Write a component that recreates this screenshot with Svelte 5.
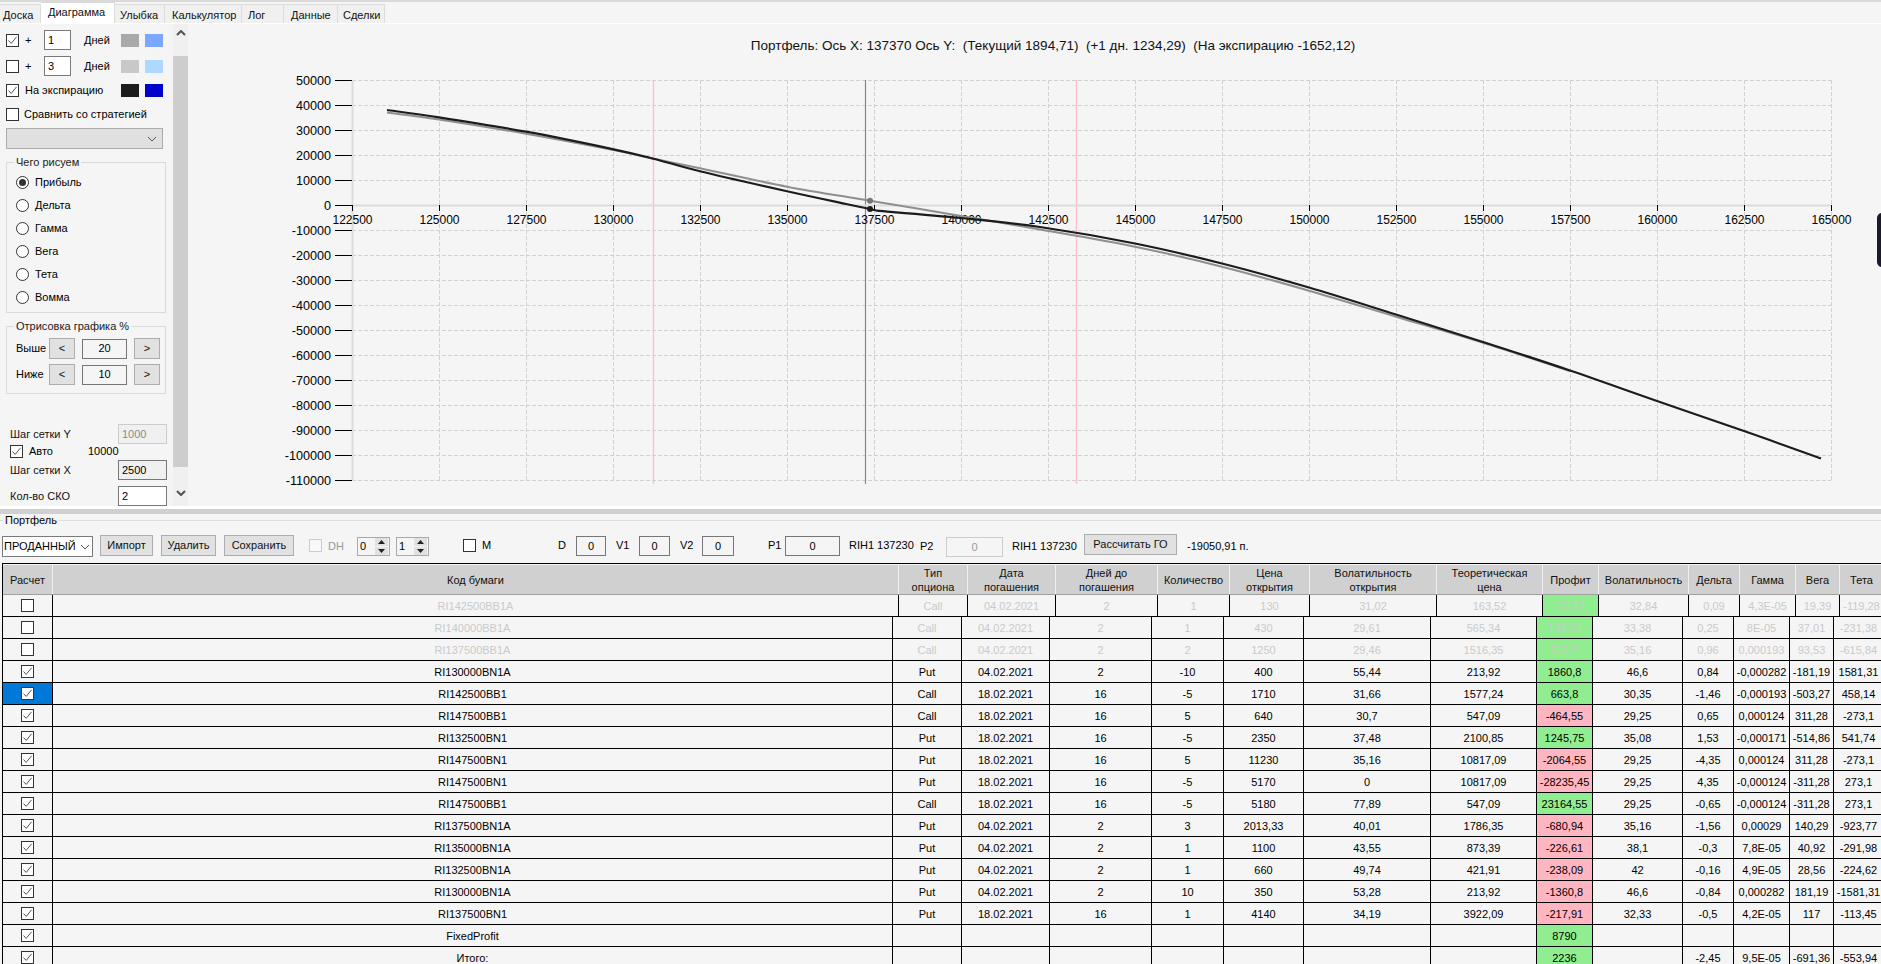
<script>
  const tabs = [
    { t: 'Доска', w: 41, px: 3 },
    { t: 'Диаграмма', w: 74, px: 7, active: true },
    { t: 'Улыбка', w: 50, px: 5 },
    { t: 'Калькулятор', w: 77, px: 7 },
    { t: 'Лог', w: 42, px: 6 },
    { t: 'Данные', w: 54, px: 7 },
    { t: 'Сделки', w: 47, px: 5 }
  ];
  const radios = ['Прибыль', 'Дельта', 'Гамма', 'Вега', 'Тета', 'Вомма'];
  const heads = [
    ['Код бумаги'], ['Тип', 'опциона'], ['Дата', 'погашения'], ['Дней до', 'погашения'], ['Количество'],
    ['Цена', 'открытия'], ['Волатильность', 'открытия'], ['Теоретическая', 'цена'], ['Профит'],
    ['Волатильность'], ['Дельта'], ['Гамма'], ['Вега'], ['Тета']
  ];
  const raw = [
    'RI142500BB1A|Call|04.02.2021|2|1|130|31,02|163,52|33,52|32,84|0,09|4,3E-05|19,39|-119,28',
    'RI140000BB1A|Call|04.02.2021|2|1|430|29,61|565,34|135,34|33,38|0,25|8E-05|37,01|-231,38',
    'RI137500BB1A|Call|04.02.2021|2|2|1250|29,46|1516,35|532,7|35,16|0,96|0,000193|93,53|-615,84',
    'RI130000BN1A|Put|04.02.2021|2|-10|400|55,44|213,92|1860,8|46,6|0,84|-0,000282|-181,19|1581,31',
    'RI142500BB1|Call|18.02.2021|16|-5|1710|31,66|1577,24|663,8|30,35|-1,46|-0,000193|-503,27|458,14',
    'RI147500BB1|Call|18.02.2021|16|5|640|30,7|547,09|-464,55|29,25|0,65|0,000124|311,28|-273,1',
    'RI132500BN1|Put|18.02.2021|16|-5|2350|37,48|2100,85|1245,75|35,08|1,53|-0,000171|-514,86|541,74',
    'RI147500BN1|Put|18.02.2021|16|5|11230|35,16|10817,09|-2064,55|29,25|-4,35|0,000124|311,28|-273,1',
    'RI147500BN1|Put|18.02.2021|16|-5|5170|0|10817,09|-28235,45|29,25|4,35|-0,000124|-311,28|273,1',
    'RI147500BB1|Call|18.02.2021|16|-5|5180|77,89|547,09|23164,55|29,25|-0,65|-0,000124|-311,28|273,1',
    'RI137500BN1A|Put|04.02.2021|2|3|2013,33|40,01|1786,35|-680,94|35,16|-1,56|0,00029|140,29|-923,77',
    'RI135000BN1A|Put|04.02.2021|2|1|1100|43,55|873,39|-226,61|38,1|-0,3|7,8E-05|40,92|-291,98',
    'RI132500BN1A|Put|04.02.2021|2|1|660|49,74|421,91|-238,09|42|-0,16|4,9E-05|28,56|-224,62',
    'RI130000BN1A|Put|04.02.2021|2|10|350|53,28|213,92|-1360,8|46,6|-0,84|0,000282|181,19|-1581,31',
    'RI137500BN1|Put|18.02.2021|16|1|4140|34,19|3922,09|-217,91|32,33|-0,5|4,2E-05|117|-113,45',
    'FixedProfit||||||||8790|||||',
    'Итого:||||||||2236||-2,45|9,5E-05|-691,36|-553,94'
  ];
  const rows = raw.map((s, i) => ({ cells: s.split('|'), off: i < 3, sel: i === 4 }));

  const gridX = Array.from({ length: 18 }, (_, i) => 352.5 + i * 87);
  const xLabels = gridX.map((x, i) => ({ x, t: String(122500 + i * 2500) }));
  const gridY = Array.from({ length: 17 }, (_, i) => 80.5 + i * 25);
  const yLabels = gridY.map((y, i) => ({ y, t: String(50000 - i * 10000) }));

  // Catmull-Rom through the points, so the curve has no kinks between samples
  function smooth(p) {
    let d = `M${p[0][0]} ${p[0][1]}`;
    for (let i = 0; i < p.length - 1; i++) {
      const a = p[i - 1] || p[i], b = p[i], c = p[i + 1], e = p[i + 2] || c;
      const c1 = [b[0] + (c[0] - a[0]) / 6, b[1] + (c[1] - a[1]) / 6];
      const c2 = [c[0] - (e[0] - b[0]) / 6, c[1] - (e[1] - b[1]) / 6];
      d += ` C${c1[0]} ${c1[1]} ${c2[0]} ${c2[1]} ${c[0]} ${c[1]}`;
    }
    return d;
  }
  const black = smooth([[387, 110], [439, 117.3], [526, 131.7], [613.6, 149.3], [653.6, 158.7], [700, 171.3], [787, 191.3], [846, 204], [870, 209]])
    + ' L877 210.7 ' + smooth([[877, 210.7], [961, 218], [1040, 227], [1135, 243.5], [1222, 263.5], [1309, 287.5], [1396, 314.5], [1483, 342], [1570, 370.5], [1657, 401], [1744, 431], [1821, 458.5]]).replace(/^M\S+ \S+ /, '');
  const grey = smooth([[387, 112.5], [439, 119.5], [526, 133.7], [613.6, 150], [653.6, 158.7], [700, 168.3], [787, 186.7], [870, 200.7], [961, 216], [1040, 229.5], [1135, 246.7], [1222, 266.7], [1309, 290.7], [1396, 316.7], [1483, 342.8], [1570, 371]]);
</script>

{#snippet cb(on)}
  <span class="cb">
    {#if on}
      <svg width="11" height="11" viewBox="0 0 11 11"><path d="M1.5 5.5 L4.2 8.4 L9.6 1.8" fill="none" stroke="#555" stroke-width="1" /></svg>
    {/if}
  </span>
{/snippet}

{#snippet arrow(up)}
  <svg class="spin-tri" width="7" height="4" viewBox="0 0 7 4"><path d={up ? 'M3.5 0 L7 4 L0 4 Z' : 'M0 0 L7 0 L3.5 4 Z'} fill="#222" /></svg>
{/snippet}

{#snippet spin(v)}
  <span class="spin">
    <span class="spin-v">{v}</span>
    <span class="spin-btns">
      <span class="spin-b">{@render arrow(true)}</span>
      <span class="spin-b">{@render arrow(false)}</span>
    </span>
  </span>
{/snippet}

<div class="app">
  <div class="topbar"></div>
  <div class="tabs">
    {#each tabs as tab}
      <div class="tab" class:active={tab.active} style="width:{tab.w}px;padding-left:{tab.px}px">{tab.t}</div>
    {/each}
  </div>

  <div class="upper">
    <div class="side">
      <div class="row r1">
        {@render cb(true)}<span class="plus">+</span><span class="num">1</span><span class="days">Дней</span>
        <span class="sw a1"></span><span class="sw a2"></span>
      </div>
      <div class="row r2">
        {@render cb(false)}<span class="plus">+</span><span class="num">3</span><span class="days">Дней</span>
        <span class="sw b1"></span><span class="sw b2"></span>
      </div>
      <div class="row r3">
        {@render cb(true)}<span class="exp">На экспирацию</span>
        <span class="sw c1"></span><span class="sw c2"></span>
      </div>
      <div class="row r4">
        {@render cb(false)}<span class="cmp">Сравнить со стратегией</span>
      </div>
      <div class="dis-combo">
        <svg width="10" height="6" viewBox="0 0 10 6"><path d="M1 1 L5 5 L9 1" fill="none" stroke="#555" stroke-width="1" /></svg>
      </div>

      <div class="group g1">
        <div class="legend">Чего рисуем</div>
        <div class="radios">
          {#each radios as r, i}
            <div class="radio-row">
              <span class="rb">{#if i === 0}<span class="dot"></span>{/if}</span>
              <span class="rt">{r}</span>
            </div>
          {/each}
        </div>
      </div>

      <div class="group g2">
        <div class="legend">Отрисовка графика %</div>
        <div class="draw">
          <div class="draw-row"><span class="dl">Выше</span><span class="btn sq">&lt;</span><span class="fld">20</span><span class="btn sq">&gt;</span></div>
          <div class="draw-row"><span class="dl">Ниже</span><span class="btn sq">&lt;</span><span class="fld">10</span><span class="btn sq">&gt;</span></div>
        </div>
      </div>

      <div class="st st-y"><span class="st-l">Шаг сетки Y</span><span class="val dis">1000</span></div>
      <div class="auto">{@render cb(true)}<span class="auto-l">Авто</span><span class="auto-v">10000</span></div>
      <div class="st st-x"><span class="st-l">Шаг сетки X</span><span class="val grey">2500</span></div>
      <div class="st st-s"><span class="st-l">Кол-во СКО</span><span class="val wh">2</span></div>
    </div>

    <div class="sb">
      <div class="sb-end top"><svg width="10" height="6" viewBox="0 0 10 6"><path d="M1 5 L5 1 L9 5" fill="none" stroke="#505050" stroke-width="2" /></svg></div>
      <div class="sb-thumb"></div>
      <div class="sb-end bot"><svg width="10" height="6" viewBox="0 0 10 6"><path d="M1 1 L5 5 L9 1" fill="none" stroke="#505050" stroke-width="2" /></svg></div>
    </div>

    <svg class="chart" viewBox="188 24 1693 482" width="1693" height="482">
      <text x="1053" y="50" text-anchor="middle" class="title" xml:space="preserve">Портфель: Ось X: 137370 Ось Y:  (Текущий 1894,71)  (+1 дн. 1234,29)  (На экспирацию -1652,12)</text>
      {#each gridY as y, i}
        {#if i !== 5}<line x1="352" x2="1831" y1={y} y2={y} class="grid" />{/if}
      {/each}
      {#each gridX as x, i}
        {#if i > 0}<line x1={x} x2={x} y1="80" y2="480" class="grid" />{/if}
      {/each}
      <line x1="653.5" x2="653.5" y1="80" y2="484" class="pink" />
      <line x1="1076.5" x2="1076.5" y1="80" y2="484" class="pink" />
      <line x1="865.5" x2="865.5" y1="80" y2="484" class="vline" />
      <line x1="352.5" x2="352.5" y1="80" y2="481" class="axis" />
      <line x1="352" x2="1831" y1="205.5" y2="205.5" class="axis" />
      {#each yLabels as l}
        <line x1="335" x2="352" y1={l.y} y2={l.y} class="tick" />
        <text x="331" y={l.y + 4.5} text-anchor="end" class="lab ylab">{l.t}</text>
      {/each}
      {#each xLabels as l}
        <line x1={l.x} x2={l.x} y1="205" y2="211" class="tick" />
        <text x={l.x} y="223.5" text-anchor="middle" class="lab">{l.t}</text>
      {/each}
      <path d={grey} class="c-grey" />
      <path d={black} class="c-black" />
      <circle cx="870" cy="200.7" r="3" fill="#777" />
      <circle cx="870" cy="209" r="3" fill="#1c1c1c" />
      <rect x="1877" y="213" width="12" height="54" rx="5" fill="#1a1a2a" />
    </svg>
  </div>

  <div class="split"></div>

  <div class="pf-head"><div class="pf-legend">Портфель</div></div>

  <div class="toolbar">
    <span class="combo"><span class="combo-t">ПРОДАННЫЙ</span><svg width="10" height="6" viewBox="0 0 10 6"><path d="M1 1 L5 5 L9 1" fill="none" stroke="#555" stroke-width="1" /></svg></span>
    <span class="btn t-imp">Импорт</span>
    <span class="btn t-del">Удалить</span>
    <span class="btn t-sav">Сохранить</span>
    <span class="t-dh"><span class="cb light"></span></span><span class="t-dhl">DH</span>
    <span class="t-s1">{@render spin('0')}</span>
    <span class="t-s2">{@render spin('1')}</span>
    <span class="t-m">{@render cb(false)}</span><span class="t-ml">M</span>
    <span class="t-d">D</span><span class="box t-db">0</span>
    <span class="t-v1">V1</span><span class="box t-v1b">0</span>
    <span class="t-v2">V2</span><span class="box t-v2b">0</span>
    <span class="t-p1">P1</span><span class="box t-p1b">0</span>
    <span class="t-r1">RIH1 137230</span>
    <span class="t-p2">P2</span><span class="box off t-p2b">0</span>
    <span class="t-r2">RIH1 137230</span>
    <span class="btn t-calc">Рассчитать ГО</span>
    <span class="t-go">-19050,91 п.</span>
  </div>

  <div class="table">
    <div class="hrow cols-h">
      <div class="hc">Расчет</div>
      {#each heads as h}
        <div class="hc">{#each h as line}<div>{line}</div>{/each}</div>
      {/each}
    </div>
    {#each rows as row, i}
      <div class="drow" class:cols-h={i === 0} class:cols-s={i !== 0} class:off={row.off}>
        <div class="dc chk" class:sel={row.sel}>{@render cb(!row.off)}</div>
        {#each row.cells as c, j}
          <div class="dc"
            class:good={j === 8 && !c.startsWith('-')}
            class:bad={j === 8 && c.startsWith('-')}>{c}</div>
        {/each}
      </div>
    {/each}
  </div>
</div>

<style>
  :global(body) { margin: 0; background: #f5f5f5; }
  .app {
    width: 1881px; height: 964px; overflow: hidden; background: #f5f5f5; color: #000;
    font: 11px/13px "Liberation Sans", Arial, sans-serif;
    display: flex; flex-direction: column;
  }
  .topbar { height: 2px; background: #dadada; flex: none; }

  .tabs { flex: none; display: flex; align-items: flex-end; border-bottom: 1px solid #fff; box-sizing: content-box; height: 21px; }
  .tab {
    box-sizing: border-box; height: 19px; background: #f0f0f0; border: 1px solid #dcdcdc; border-bottom: 0;
    border-left: 0; padding-top: 4px; color: #111;
  }
  .tab.active { height: 21px; background: #fff; padding-top: 3px; border-top: 1px solid #d8d8d8; }

  .upper { height: 482px; flex: none; display: flex; }
  .side { width: 172px; flex: none; box-sizing: border-box; padding: 6px 0 0 6px; overflow: hidden; }
  .row { height: 20px; display: flex; align-items: center; }
  .r2 { margin-top: 6px; }
  .r3 { margin-top: 4px; }
  .r4 { margin-top: 4px; }
  .cb {
    width: 13px; height: 13px; box-sizing: border-box; border: 1px solid #333; background: #fff;
    display: flex; align-items: center; justify-content: center; flex: none;
  }
  .cb.light { border-color: #ccc; background: #f8f8f8; }
  .plus { width: 19px; margin-left: 6px; }
  .num { width: 27px; height: 20px; box-sizing: border-box; border: 1px solid #7a7a7a; background: #fff; padding: 3px 0 0 3px; }
  .days { width: 37px; margin-left: 13px; }
  .exp { width: 96px; margin-left: 6px; }
  .cmp { margin-left: 5px; }
  .sw { width: 18px; height: 13px; flex: none; }
  .sw + .sw { margin-left: 6px; }
  .a1 { background: #a9a9a9; } .a2 { background: #7aa8ff; }
  .b1 { background: #c8c8c8; } .b2 { background: #add8ff; }
  .c1 { background: #1c1c1c; } .c2 { background: #0000cd; }
  .dis-combo {
    width: 157px; height: 21px; margin-top: 4px; box-sizing: border-box; background: #e0e0e0; border: 1px solid #acacac;
    display: flex; align-items: center; justify-content: flex-end; padding-right: 5px;
  }

  .group { width: 160px; box-sizing: border-box; border: 1px solid #dadada; }
  .legend { display: table; margin: -7px 0 0 7px; padding: 0 2px; background: #f5f5f5; color: #222; }
  .g1 { height: 151px; margin-top: 13px; }
  .radios { margin-top: 2px; }
  .radio-row { height: 23px; display: flex; align-items: center; padding-left: 9px; }
  .rb {
    width: 13px; height: 13px; box-sizing: border-box; border: 1px solid #333; border-radius: 50%; background: #fff;
    display: flex; align-items: center; justify-content: center;
  }
  .dot { width: 7px; height: 7px; border-radius: 50%; background: #333; }
  .rt { margin-left: 6px; }

  .g2 { height: 68px; margin-top: 13px; }
  .draw { margin-top: 5px; display: flex; flex-direction: column; gap: 5px; padding-left: 9px; }
  .draw-row { height: 21px; display: flex; align-items: center; }
  .dl { width: 33px; }
  .btn {
    box-sizing: border-box; background: #e1e1e1; border: 1px solid #adadad; height: 21px;
    display: flex; align-items: center; justify-content: center; color: #111; flex: none;
  }
  .sq { width: 26px; }
  .fld {
    width: 45px; height: 20px; margin: 0 7px; box-sizing: border-box; border: 1px solid #777; background: #f5f5f5;
    display: flex; align-items: center; justify-content: center;
  }

  .st { display: flex; align-items: center; padding-left: 4px; height: 20px; }
  .st-l { width: 108px; color: #111; }
  .val { width: 49px; height: 20px; box-sizing: border-box; padding: 3px 0 0 3px; border: 1px solid #777; }
  .val.dis { border-color: #ccc; background: #f0f0f0; color: #8a8a8a; }
  .val.grey { background: #f0f0f0; }
  .val.wh { background: #fff; }
  .st-y { margin-top: 30px; }
  .auto { margin-top: 1px; height: 13px; padding-left: 4px; display: flex; align-items: center; }
  .auto-l { width: 59px; margin-left: 6px; }
  .st-x { margin-top: 2px; }
  .st-s { margin-top: 6px; }

  .sb { width: 15px; flex: none; margin-left: 1px; background: #f0f0f0; display: flex; flex-direction: column; }
  .sb-end { display: flex; justify-content: center; flex: none; }
  .sb-end.top { align-items: flex-start; padding-top: 6px; height: 26px; }
  .sb-end.bot { align-items: flex-end; padding-bottom: 10px; height: 29px; }
  .sb-thumb { flex: 1; background: #cdcdcd; }

  .chart { flex: none; display: block; }
  .title { font: 13.5px "Liberation Sans", Arial, sans-serif; fill: #111; white-space: pre; }
  .lab { font: 12px "Liberation Sans", Arial, sans-serif; fill: #000; }
  .ylab { font-size: 12.6px; }
  .grid { stroke: #d0d0d0; stroke-width: 1; stroke-dasharray: 4 2; }
  .pink { stroke: #ffc0cb; stroke-width: 1.4; }
  .vline { stroke: #7f8892; stroke-width: 1.2; }
  .axis { stroke: #dcdcdc; stroke-width: 2; }
  .tick { stroke: #000; stroke-width: 1; }
  .c-black, .c-grey { fill: none; stroke-linejoin: round; }
  .c-black { stroke: #1c1c1c; stroke-width: 2.2; }
  .c-grey { stroke: #8f8f8f; stroke-width: 2; }

  .split { height: 8px; flex: none; box-sizing: border-box; border-top: 3px solid #fff; background: #d0d0d0; }

  .pf-head { height: 20px; flex: none; padding-top: 6px; box-sizing: border-box; position: relative; }
  .pf-head::before { content: ''; position: absolute; left: 0; right: 0; top: 6px; border-top: 1px solid #dedede; }
  .pf-legend { display: table; position: relative; background: #f5f5f5; margin: -6px 0 0 3px; padding: 0 2px; }

  .toolbar { height: 29px; flex: none; box-sizing: border-box; padding: 1px 0 0 2px; display: flex; align-items: flex-start; }
  .toolbar > span { flex: none; white-space: nowrap; line-height: 21px; }
  .combo { width: 91px; height: 21px; margin-top: 1px; box-sizing: border-box; border: 1px solid #7a7a7a; background: #fff; display: flex; align-items: center; }
  .combo-t { width: 72px; overflow: hidden; padding-left: 1px; box-sizing: border-box; }
  .combo svg { margin-left: 5px; }
  .t-imp { width: 53px; margin-left: 7px; } .t-del { width: 55px; margin-left: 8px; } .t-sav { width: 70px; margin-left: 8px; }
  .t-dh { margin: 4px 0 0 15px; display: block; }
  .t-dhl { width: 22px; margin-left: 6px; color: #999; margin-top: 1px; }
  .t-s1 { margin: 2px 0 0 7px; display: block; } .t-s2 { margin: 2px 0 0 6px; display: block; }
  .spin { width: 33px; height: 19px; box-sizing: border-box; border: 1px solid #aaa; display: flex; background: #f5f5f5; line-height: 17px; }
  .spin-v { flex: 1; padding-left: 2px; }
  .spin-btns { width: 13px; display: flex; flex-direction: column; margin: 0 1px; gap: 1px; }
  .spin-b { flex: 1; background: #e1e1e1; display: flex; align-items: center; justify-content: center; }
  .spin-tri { display: block; }
  .t-m { margin: 4px 0 0 34px; display: block; }
  .t-ml { width: 10px; margin-left: 6px; }
  .t-d { width: 12px; margin-left: 66px; }
  .box { height: 20px; box-sizing: border-box; border: 1px solid #777; background: #f5f5f5; text-align: center; line-height: 18px !important; margin-top: 1px; }
  .box.off { border-color: #ccc; color: #999; margin-top: 2px; }
  .t-db { width: 30px; margin-left: 6px; }
  .t-v1 { width: 16px; margin-left: 10px; } .t-v1b { width: 31px; margin-left: 7px; }
  .t-v2 { width: 16px; margin-left: 10px; } .t-v2b { width: 32px; margin-left: 6px; }
  .t-p1 { width: 14px; margin-left: 34px; } .t-p1b { width: 55px; margin-left: 3px; }
  .t-r1 { width: 64px; margin-left: 9px; }
  .t-p2 { width: 14px; margin-left: 7px; margin-top: 1px; } .t-p2b { width: 57px; margin-left: 12px; }
  .t-r2 { width: 64px; margin-left: 9px; margin-top: 1px; }
  .t-calc { width: 93px; margin-left: 8px; margin-top: -1px; }
  .t-go { margin-left: 10px; margin-top: 1px; }

  .table { margin-left: 2px; border-top: 1px solid #000; border-left: 1px solid #000; padding-top: 1px; box-sizing: border-box; flex: none; width: 1879px; overflow: hidden; height: 401px; }
  .cols-h { grid-template-columns: 50px 846px 69px 88px 102px 72px 80px 127px 106px 56px 90px 51px 56px 44px 44px; }
  .cols-s { grid-template-columns: 50px 840px 69px 88px 102px 72px 80px 127px 106px 56px 90px 51px 56px 44px 50px; }
  .hrow { display: grid; height: 30px; background: #d0d0d0; border-bottom: 1px solid #a0a0a0; box-sizing: border-box; }
  .hc {
    border-right: 1px solid #f0f0f0; box-sizing: border-box; display: flex; flex-direction: column; align-items: center; justify-content: center;
    text-align: center; line-height: 14px; color: #111; white-space: nowrap;
  }
  .drow { display: grid; height: 22px; }
  .drow.off { color: #cacaca; }
  .dc {
    border-right: 1px solid #000; border-bottom: 1px solid #000; box-sizing: border-box; display: flex; align-items: center; justify-content: center;
    white-space: nowrap; overflow: hidden; min-width: 0; padding-top: 1px;
  }
  .dc.chk { padding-top: 0; }
  .dc.sel { background: #0078d7; }
  .dc.good { background: #90ee90; }
  .dc.bad { background: #ffb6c1; }
</style>
